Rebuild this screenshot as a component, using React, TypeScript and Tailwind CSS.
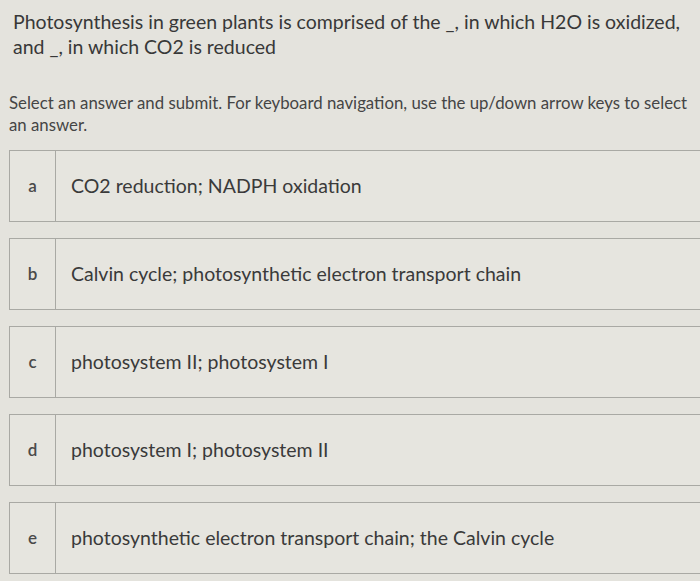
import React from 'react';

const options = [
  { key: 'a', text: 'CO2 reduction; NADPH oxidation' },
  { key: 'b', text: 'Calvin cycle; photosynthetic electron transport chain' },
  { key: 'c', text: 'photosystem II; photosystem I' },
  { key: 'd', text: 'photosystem I; photosystem II' },
  { key: 'e', text: 'photosynthetic electron transport chain; the Calvin cycle' },
];

export default function App() {
  return (
    <div
      className="w-[700px] h-[581px] overflow-hidden bg-[#e4e3dd] text-[#383838]"
      style={{ fontFamily: 'Lato, "Open Sans", sans-serif' }}
    >
      <div className="pl-[13px] pr-2 pt-[9px] text-[19.5px] leading-[25px]">
        Photosynthesis in green plants is comprised of the _, in which H2O is oxidized, and _, in which CO2 is reduced
      </div>
      <div className="pl-[9px] pt-[33px] text-[16.8px] leading-[22px] text-[#454545]">
        Select an answer and submit. For keyboard navigation, use the up/down arrow keys to select an answer.
      </div>
      <div className="mt-[14px] ml-[9px] mr-[-20px] flex flex-col gap-[16px]">
        {options.map(o => (
          <div key={o.key} className="flex h-[72px] border border-[#a9a9a4] bg-[#e6e5df]">
            <div className="w-[46px] shrink-0 flex items-center justify-center border-r border-[#a9a9a4] text-[17px] font-semibold text-[#4a4a4a]">
              {o.key}
            </div>
            <div className="flex items-center pl-[15px] text-[19.5px] text-[#3a3a3a]">
              {o.text}
            </div>
          </div>
        ))}
      </div>
    </div>
  );
}
